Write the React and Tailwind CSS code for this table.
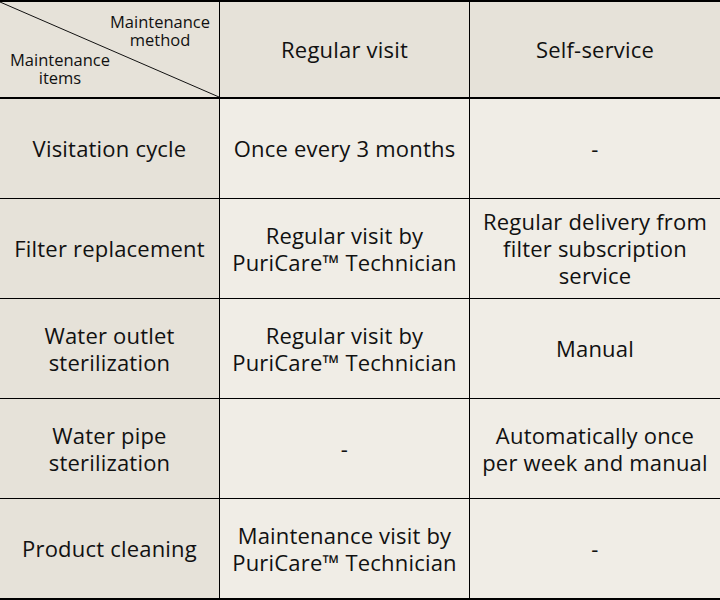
import React from 'react';

const rows = [
  ['Visitation cycle', 'Once every 3 months', '-'],
  ['Filter replacement', 'Regular visit by\nPuriCare™ Technician', 'Regular delivery from\nfilter subscription\nservice'],
  ['Water outlet\nsterilization', 'Regular visit by\nPuriCare™ Technician', 'Manual'],
  ['Water pipe\nsterilization', '-', 'Automatically once\nper week and manual'],
  ['Product cleaning', 'Maintenance visit by\nPuriCare™ Technician', '-'],
];

function Cell({ children, head, className = '' }) {
  return (
    <div
      className={`flex items-center justify-center text-center whitespace-pre-line text-[22px] leading-[27px] font-medium tracking-[0.2px] text-[#111] ${
        head ? 'bg-[#e6e2d9]' : 'bg-[#f0ede6]'
      } ${className}`}
    >
      {children}
    </div>
  );
}

export default function App() {
  return (
    <div
      className="w-[720px] h-[600px] bg-[#f0ede6] border-t-2 border-b-2 border-black flex flex-col"
      style={{ fontFamily: '"Open Sans", "Noto Sans", sans-serif' }}
    >
      <div className="flex h-[97px] shrink-0 border-b-2 border-black">
        <div className="relative w-[219px] bg-[#e6e2d9] text-[16.5px] leading-[18px] font-medium text-[#111]">
          <svg className="absolute inset-0" width="219" height="95" viewBox="0 0 219 95">
            <line x1="0" y1="0" x2="219" y2="95" stroke="#111" strokeWidth="1" />
          </svg>
          <div className="absolute left-[100px] top-[11px] w-[120px] text-center">Maintenance method</div>
          <div className="absolute left-[0px] top-[49px] w-[120px] text-center">Maintenance items</div>
        </div>
        <Cell head className="w-[250px] border-l border-black">Regular visit</Cell>
        <Cell head className="flex-1 border-l border-black">Self-service</Cell>
      </div>
      {rows.map((r, i) => (
        <div key={i} className={`flex flex-1 ${i < rows.length - 1 ? 'border-b border-black' : ''}`}>
          <Cell head className="w-[219px]">{r[0]}</Cell>
          <Cell className="w-[250px] border-l border-black">{r[1]}</Cell>
          <Cell className="flex-1 border-l border-black">{r[2]}</Cell>
        </div>
      ))}
    </div>
  );
}
